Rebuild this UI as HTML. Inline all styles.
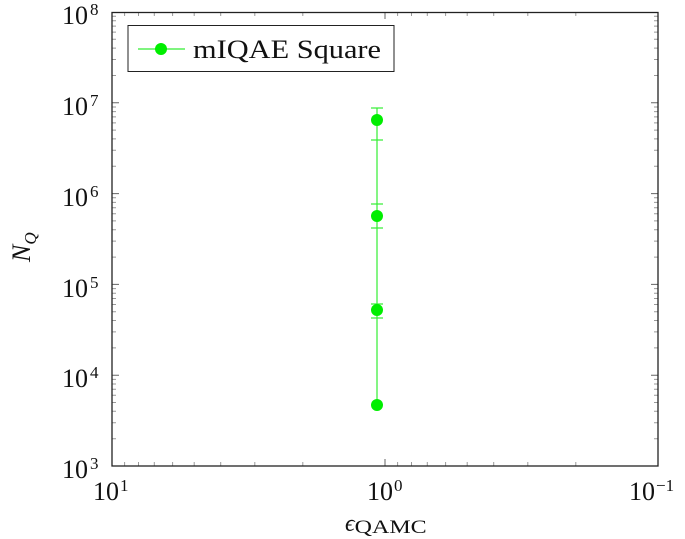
<!DOCTYPE html><html><head><style>body{margin:0;background:#fff}svg{display:block}</style></head><body>
<svg width="685" height="539" xmlns="http://www.w3.org/2000/svg" font-family="Liberation Serif, serif">
<path stroke="#999" stroke-width="1" fill="none" d="
M112 438.7h4M112 422.7h4M112 411.3h4M112 402.5h4M112 395.3h4M112 389.3h4M112 384h4M112 379.4h4
M112 347.9h4M112 331.9h4M112 320.5h4M112 311.7h4M112 304.5h4M112 298.5h4M112 293.2h4M112 288.6h4
M112 257.1h4M112 241.1h4M112 229.7h4M112 220.9h4M112 213.7h4M112 207.7h4M112 202.4h4M112 197.8h4
M112 166.3h4M112 150.3h4M112 138.9h4M112 130.1h4M112 122.9h4M112 116.9h4M112 111.6h4M112 107h4
M112 75.5h4M112 59.5h4M112 48.1h4M112 39.3h4M112 32.1h4M112 26.1h4M112 20.8h4M112 16.2h4
M658 438.7h-4M658 422.7h-4M658 411.3h-4M658 402.5h-4M658 395.3h-4M658 389.3h-4M658 384h-4M658 379.4h-4
M658 347.9h-4M658 331.9h-4M658 320.5h-4M658 311.7h-4M658 304.5h-4M658 298.5h-4M658 293.2h-4M658 288.6h-4
M658 257.1h-4M658 241.1h-4M658 229.7h-4M658 220.9h-4M658 213.7h-4M658 207.7h-4M658 202.4h-4M658 197.8h-4
M658 166.3h-4M658 150.3h-4M658 138.9h-4M658 130.1h-4M658 122.9h-4M658 116.9h-4M658 111.6h-4M658 107h-4
M658 75.5h-4M658 59.5h-4M658 48.1h-4M658 39.3h-4M658 32.1h-4M658 26.1h-4M658 20.8h-4M658 16.2h-4
M302.8 466v-4M254.8 466v-4M220.7 466v-4M194.2 466v-4M172.6 466v-4M154.3 466v-4M138.5 466v-4M124.6 466v-4
M575.8 466v-4M527.8 466v-4M493.7 466v-4M467.2 466v-4M445.6 466v-4M427.3 466v-4M411.5 466v-4M397.6 466v-4
M302.8 12v4M254.8 12v4M220.7 12v4M194.2 12v4M172.6 12v4M154.3 12v4M138.5 12v4M124.6 12v4
M575.8 12v4M527.8 12v4M493.7 12v4M467.2 12v4M445.6 12v4M427.3 12v4M411.5 12v4M397.6 12v4"/>
<path stroke="#666" stroke-width="1" fill="none" d="M112 375.2h7M112 284.4h7M112 193.6h7M112 102.8h7M658 375.2h-7M658 284.4h-7M658 193.6h-7M658 102.8h-7M385 466v-7M385 12v7"/>
<rect x="112" y="12.5" width="546" height="453.5" fill="none" stroke="#222" stroke-width="1.3"/>
<g stroke="#33ee33" stroke-width="1.2">
<line x1="377" y1="108" x2="377" y2="405"/>
<line x1="371" y1="108" x2="383" y2="108"/><line x1="371" y1="140" x2="383" y2="140"/>
<line x1="371" y1="204" x2="383" y2="204"/><line x1="371" y1="228" x2="383" y2="228"/>
<line x1="371" y1="304" x2="383" y2="304"/><line x1="371" y1="318" x2="383" y2="318"/>
</g>
<g fill="#00ee00"><circle cx="377" cy="120" r="6"/><circle cx="377" cy="216" r="6"/><circle cx="377" cy="310" r="6"/><circle cx="377" cy="405" r="6"/></g>
<rect x="128" y="25.5" width="266" height="46" fill="#fff" stroke="#222" stroke-width="1"/>
<line x1="138" y1="49" x2="185" y2="49" stroke="#33ee33" stroke-width="1.2"/><circle cx="161" cy="49" r="6" fill="#00ee00"/>
<text x="193" y="58" font-size="26" fill="#111" textLength="188" lengthAdjust="spacingAndGlyphs">mIQAE Square</text>
<g font-size="26" fill="#111">
<text x="62" y="24" textLength="26" lengthAdjust="spacingAndGlyphs">10</text><text x="62" y="115" textLength="26" lengthAdjust="spacingAndGlyphs">10</text><text x="62" y="206" textLength="26" lengthAdjust="spacingAndGlyphs">10</text><text x="62" y="297" textLength="26" lengthAdjust="spacingAndGlyphs">10</text><text x="62" y="387" textLength="26" lengthAdjust="spacingAndGlyphs">10</text><text x="62" y="478" textLength="26" lengthAdjust="spacingAndGlyphs">10</text>
</g>
<g font-size="17" fill="#111"><text x="90" y="15">8</text><text x="90" y="106">7</text><text x="90" y="197">6</text><text x="90" y="288">5</text><text x="90" y="378">4</text><text x="90" y="469">3</text></g>
<g font-size="26" fill="#111">
<text x="93" y="500" textLength="26" lengthAdjust="spacingAndGlyphs">10</text><text x="120" y="491" font-size="17">1</text>
<text x="367" y="500" textLength="26" lengthAdjust="spacingAndGlyphs">10</text><text x="394" y="491" font-size="17">0</text>
<text x="629" y="500" textLength="26" lengthAdjust="spacingAndGlyphs">10</text><text x="656" y="491" font-size="17">−1</text>
</g>
<text x="345" y="531" font-size="24" font-style="italic" fill="#111">ϵ<tspan font-size="19" font-style="normal" dy="2" textLength="72" lengthAdjust="spacingAndGlyphs">QAMC</tspan></text>
<text transform="translate(30,262) rotate(-90)" font-size="26" font-style="italic" fill="#111">N<tspan font-size="17" dy="6">Q</tspan></text>
</svg>
</body></html>
